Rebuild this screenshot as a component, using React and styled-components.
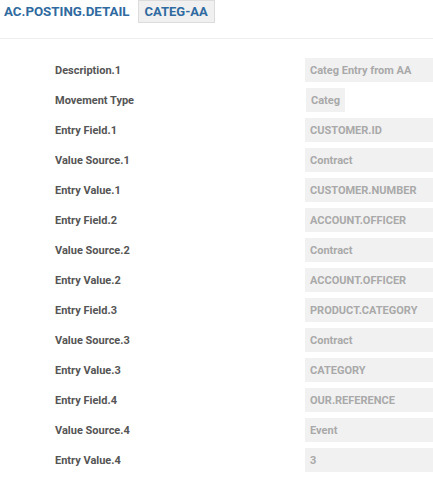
import React from "react";
import styled, { createGlobalStyle } from "styled-components";

const Global = createGlobalStyle`
  html, body { margin: 0; padding: 0; background: #fff; }
  body { font-family: Roboto, "Liberation Sans", sans-serif; overflow: hidden; }
`;

const Page = styled.div`
  width: 433px;
  overflow: hidden;
`;

const Header = styled.div`
  display: flex;
  align-items: flex-start;
  height: 24px;
  padding-left: 4px;
  gap: 8px;
`;

const Title = styled.span`
  line-height: 24px;
  font-size: 13.3px;
  font-weight: 700;
  color: #2f6aa0;
`;

const Tag = styled.span`
  display: inline-flex;
  align-items: center;
  box-sizing: border-box;
  height: 23px;
  padding: 0 6px;
  background: #f0f0f0;
  border: 1px solid #dcdcdc;
  font-size: 13px;
  font-weight: 700;
  color: #2f6aa0;
`;

const Divider = styled.hr`
  margin: 14px 0 0;
  border: none;
  border-top: 1px solid #eeeeee;
  width: 100%;
`;

const List = styled.div`
  display: grid;
  grid-template-columns: 250px 1fr;
  padding: 19px 0 0 55px;
  row-gap: 6px;
`;

const Label = styled.div`
  display: flex;
  align-items: center;
  height: 24px;
  font-size: 11px;
  font-weight: 700;
  color: #555;
`;

const ValueCell = styled.div`
  display: flex;
  align-items: center;
  height: 24px;
  overflow: hidden;
`;

const Value = styled.span`
  display: flex;
  align-items: center;
  box-sizing: border-box;
  height: 24px;
  padding: 0 5px;
  background: #f1f1f1;
  font-size: 11px;
  font-weight: 700;
  color: #a9a9a9;
  white-space: nowrap;
  flex: ${(p) => (p.$wide ? "0 0 150px" : "0 0 auto")};
  margin-left: ${(p) => (p.$wide ? "0" : "1px")};
`;

const rows = [
  ["Description.1", "Categ Entry from AA", true],
  ["Movement Type", "Categ", false],
  ["Entry Field.1", "CUSTOMER.ID", true],
  ["Value Source.1", "Contract", true],
  ["Entry Value.1", "CUSTOMER.NUMBER", true],
  ["Entry Field.2", "ACCOUNT.OFFICER", true],
  ["Value Source.2", "Contract", true],
  ["Entry Value.2", "ACCOUNT.OFFICER", true],
  ["Entry Field.3", "PRODUCT.CATEGORY", true],
  ["Value Source.3", "Contract", true],
  ["Entry Value.3", "CATEGORY", true],
  ["Entry Field.4", "OUR.REFERENCE", true],
  ["Value Source.4", "Event", true],
  ["Entry Value.4", "3", true],
];

export default function App() {
  return (
    <Page>
      <Global />
      <Header>
        <Title>AC.POSTING.DETAIL</Title>
        <Tag>CATEG-AA</Tag>
      </Header>
      <Divider />
      <List>
        {rows.map(([l, v, w]) => (
          <React.Fragment key={l}>
            <Label>{l}</Label>
            <ValueCell>
              <Value $wide={w}>{v}</Value>
            </ValueCell>
          </React.Fragment>
        ))}
      </List>
    </Page>
  );
}
